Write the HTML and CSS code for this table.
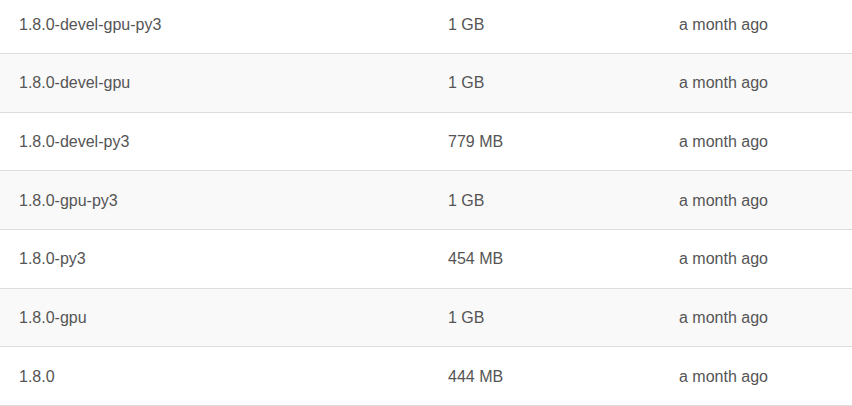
FILE: index.html
```html
<!DOCTYPE html>
<html>
<head>
<meta charset="utf-8">
<link rel="stylesheet" href="styles.css">
</head>
<body>
<div class="table">
  <div class="row"><div class="cell tag">1.8.0-devel-gpu-py3</div><div class="cell size">1 GB</div><div class="cell age">a month ago</div></div>
  <div class="row"><div class="cell tag">1.8.0-devel-gpu</div><div class="cell size">1 GB</div><div class="cell age">a month ago</div></div>
  <div class="row"><div class="cell tag">1.8.0-devel-py3</div><div class="cell size">779 MB</div><div class="cell age">a month ago</div></div>
  <div class="row"><div class="cell tag">1.8.0-gpu-py3</div><div class="cell size">1 GB</div><div class="cell age">a month ago</div></div>
  <div class="row"><div class="cell tag">1.8.0-py3</div><div class="cell size">454 MB</div><div class="cell age">a month ago</div></div>
  <div class="row"><div class="cell tag">1.8.0-gpu</div><div class="cell size">1 GB</div><div class="cell age">a month ago</div></div>
  <div class="row"><div class="cell tag">1.8.0</div><div class="cell size">444 MB</div><div class="cell age">a month ago</div></div>
</div>
</body>
</html>
```
FILE: styles.css
```css
html, body {
  margin: 0;
  padding: 0;
  background: #fff;
}
body {
  font-family: "Liberation Sans", Arial, sans-serif;
  font-size: 16px;
  color: #555;
  overflow: hidden;
}
.table {
  margin-top: -4.67px;
}
.row {
  display: grid;
  grid-template-columns: 429px 231px 1fr;
  height: 57.67px;
  border-bottom: 1px solid #ddd;
  align-items: center;
}
.row:nth-child(even) {
  background: #f9f9f9;
}
.cell {
  padding: 1px 18px 0 19px;
  line-height: 20px;
}
```
